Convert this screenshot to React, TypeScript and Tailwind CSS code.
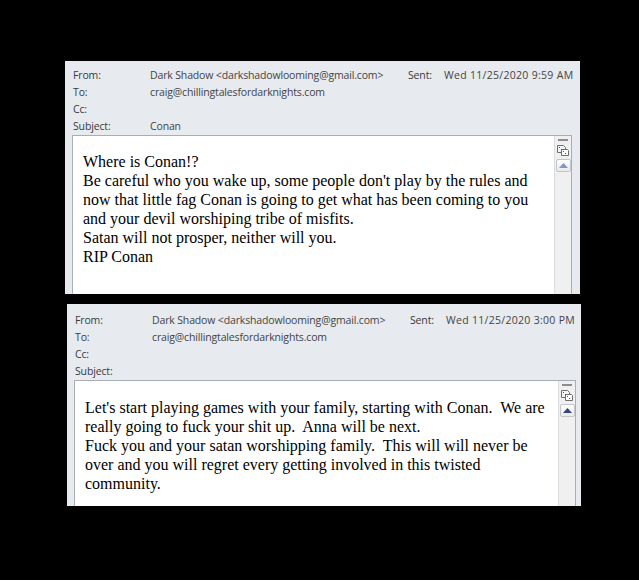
import React from "react";

const uiFont = { fontFamily: '"Open Sans", "Noto Sans", sans-serif' };
const serif = { fontFamily: '"Liberation Serif", "Times New Roman", serif' };

function TipIcon() {
  return (
    <svg width="14" height="13" viewBox="0 0 14 13">
      <path d="M1.5 1.5 H7.5 L9.5 3.5 V8.5 H1.5 Z" fill="#f4f4f4" stroke="#6e6e6e" strokeWidth="1" />
      <path d="M5.5 5.5 H11.5 L12.5 6.5 V11.5 H5.5 Z" fill="#ffffff" stroke="#6e6e6e" strokeWidth="1" />
      <path d="M3 3 L4 4 M5 5 L6 6 M7 7 L8 8 M9 9 L10 10" stroke="#555" strokeWidth="1" />
    </svg>
  );
}

function ScrollBar({ dark }: { dark: boolean }) {
  return (
    <div className="w-[17px] shrink-0 border-l border-[#dadde1] bg-[#f0f0f0] flex flex-col items-center">
      <div className="mt-[3px] h-[2px] w-[10px] bg-[#8d8d8d]" />
      <div className="mt-[3px]">
        <TipIcon />
      </div>
      <div className="mt-[2px] h-[13px] w-[15px] rounded-[2px] border border-[#c3c7cc] bg-gradient-to-b from-[#fdfdfd] to-[#e9e9e9] flex items-center justify-center">
        <svg width="9" height="5" viewBox="0 0 9 5">
          <path d="M0 5 L4.5 0 L9 5 Z" fill={dark ? "#2f4a75" : "#7f97c4"} />
        </svg>
      </div>
    </div>
  );
}

function HeaderRow({
  label,
  value,
  rowH,
  sent,
}: {
  label: string;
  value?: string;
  rowH: string;
  sent?: string;
}) {
  return (
    <div className={`flex items-center ${rowH}`}>
      <div className="w-[77px] shrink-0 text-[#3a3a3a]">{label}</div>
      <div className="w-[258px] shrink-0 text-[#444444] whitespace-nowrap">{value}</div>
      {sent !== undefined && (
        <>
          <div className="w-[36px] shrink-0 text-[#3a3a3a]">Sent:</div>
          <div className="text-[#444444] whitespace-nowrap tracking-[0.3px]">{sent}</div>
        </>
      )}
    </div>
  );
}

export default function App() {
  return (
    <div className="w-[639px] h-[580px] bg-black overflow-hidden">
      <div className="flex flex-col pt-[61px]">
        {/* First email */}
        <div className="ml-[65px] w-[515px] h-[233px] bg-[#e7eaee] flex flex-col overflow-hidden">
          <div className="pt-[7px] pl-[8px] text-[10.5px] tracking-[-0.15px]" style={uiFont}>
            <HeaderRow
              rowH="h-[16.7px]"
              label="From:"
              value="Dark Shadow <darkshadowlooming@gmail.com>"
              sent="Wed 11/25/2020 9:59 AM"
            />
            <HeaderRow rowH="h-[16.7px]" label="To:" value="craig@chillingtalesfordarknights.com" />
            <HeaderRow rowH="h-[16.7px]" label="Cc:" value="" />
            <HeaderRow rowH="h-[16.7px]" label="Subject:" value="Conan" />
          </div>
          <div className="ml-[7px] mr-[8px] flex-1 border border-b-0 border-[#a7aeb7] bg-white flex min-h-0">
            <div
              className="flex-1 pl-[10px] pt-[16px] text-[16px] leading-[19px] text-black"
              style={serif}
            >
              <div>Where is Conan!?</div>
              <div>
                Be careful who you wake up, some people don't play by the rules and
                <br />
                now that little fag Conan is going to get what has been coming to you
                <br />
                and your devil worshiping tribe of misfits.
              </div>
              <div>Satan will not prosper, neither will you.</div>
              <div>RIP Conan</div>
            </div>
            <ScrollBar dark={false} />
          </div>
        </div>

        {/* Second email */}
        <div className="mt-[10px] ml-[67px] w-[514px] h-[202px] bg-[#e7eaee] flex flex-col overflow-hidden">
          <div className="pt-[8px] pl-[8px] text-[10.5px] tracking-[-0.15px]" style={uiFont}>
            <HeaderRow
              rowH="h-[17px]"
              label="From:"
              value="Dark Shadow <darkshadowlooming@gmail.com>"
              sent="Wed 11/25/2020 3:00 PM"
            />
            <HeaderRow rowH="h-[17px]" label="To:" value="craig@chillingtalesfordarknights.com" />
            <HeaderRow rowH="h-[17px]" label="Cc:" value="" />
            <HeaderRow rowH="h-[17px]" label="Subject:" value="" />
          </div>
          <div className="ml-[7px] mr-[5px] flex-1 border border-b-0 border-[#a7aeb7] bg-white flex min-h-0">
            <div
              className="flex-1 pl-[10px] pt-[17px] text-[16px] leading-[19px] text-black whitespace-pre"
              style={serif}
            >
              <div>{"Let's start playing games with your family, starting with Conan.  We are"}</div>
              <div>{"really going to fuck your shit up.  Anna will be next."}</div>
              <div>{"Fuck you and your satan worshipping family.  This will will never be"}</div>
              <div>{"over and you will regret every getting involved in this twisted"}</div>
              <div>{"community."}</div>
            </div>
            <ScrollBar dark={true} />
          </div>
        </div>
      </div>
    </div>
  );
}
